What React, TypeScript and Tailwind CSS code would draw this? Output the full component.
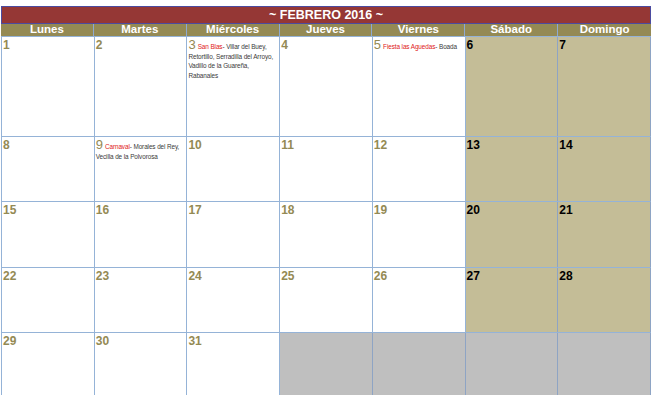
import React from "react";

type Cell = { n?: number; kind: "w" | "we" | "g"; ev?: { red: string; rest: string } };

const days = ["Lunes", "Martes", "Miércoles", "Jueves", "Viernes", "Sábado", "Domingo"];

const events: Record<number, { red: string; rest: string }> = {
  3: { red: "San Blas", rest: "- Villar del Buey, Retortillo, Serradilla del Arroyo, Vadillo de la Guareña, Rabanales" },
  5: { red: "Fiesta las Aguedas", rest: "- Boada" },
  9: { red: "Carnaval", rest: "- Morales del Rey, Vecilla de la Polvorosa" },
};

const rows: Cell[][] = [];
let d = 1;
for (let r = 0; r < 5; r++) {
  const row: Cell[] = [];
  for (let c = 0; c < 7; c++) {
    if (d > 31 || (r === 4 && c >= 3)) {
      row.push({ kind: "g" });
    } else {
      row.push({ n: d, kind: c >= 5 ? "we" : "w", ev: events[d] });
      d++;
    }
  }
  rows.push(row);
}

const heights = ["h-[100px]", "h-[65px]", "h-[66px]", "h-[65px]", "h-[66px]"];

export default function App() {
  return (
    <div className="w-[653px] h-[395px] overflow-hidden bg-white pt-[6px] pl-[1px]" style={{ fontFamily: '"Liberation Sans", Arial, sans-serif' }}>
      <div className="w-[650px]">
        <div className="h-[18px] bg-[#953735] border border-[#4b4ba0] flex items-center justify-center text-white font-bold text-[12.5px] leading-none">
          ~ FEBRERO 2016 ~
        </div>
        <div className="grid grid-cols-7 bg-[#948a54] h-[13px] border-b border-[#95b3d7]">
          {days.map((dn, i) => (
            <div key={dn} className={`flex items-center justify-center text-white font-bold text-[11.5px] leading-none ${i < 6 ? "border-r border-[#8eaad0]" : ""}`}>
              {dn}
            </div>
          ))}
        </div>
        <div className="border-l border-[#95b3d7]">
          {rows.map((row, ri) => (
            <div key={ri} className={`grid grid-cols-7 ${heights[ri]} border-b border-[#95b3d7]`}>
              {row.map((c, ci) => {
                const bg = c.kind === "we" ? "bg-[#c4bd97]" : c.kind === "g" ? "bg-[#bfbfbf]" : "bg-white";
                const br = c.kind === "w" ? "border-[#95b3d7]" : "border-[#8ea4c4]";
                return (
                  <div key={ci} className={`${bg} border-r ${br} px-[1px] pt-[1px] overflow-hidden`}>
                    {c.n !== undefined && (c.ev ? (
                      <div className="text-[6.4px] leading-[9.5px] tracking-[-0.1px] text-[#3a3a3a]">
                        <span className="text-[13px] leading-[13px] tracking-normal text-[#938953] mr-[2px]">{c.n}</span>
                        <span className="text-[#e02020]">{c.ev.red}</span>
                        {c.ev.rest}
                      </div>
                    ) : (
                      <div className={`font-bold text-[12px] leading-[14px] ${c.kind === "we" ? "text-black" : "text-[#948a54]"}`}>{c.n}</div>
                    ))}
                  </div>
                );
              })}
            </div>
          ))}
        </div>
      </div>
    </div>
  );
}
